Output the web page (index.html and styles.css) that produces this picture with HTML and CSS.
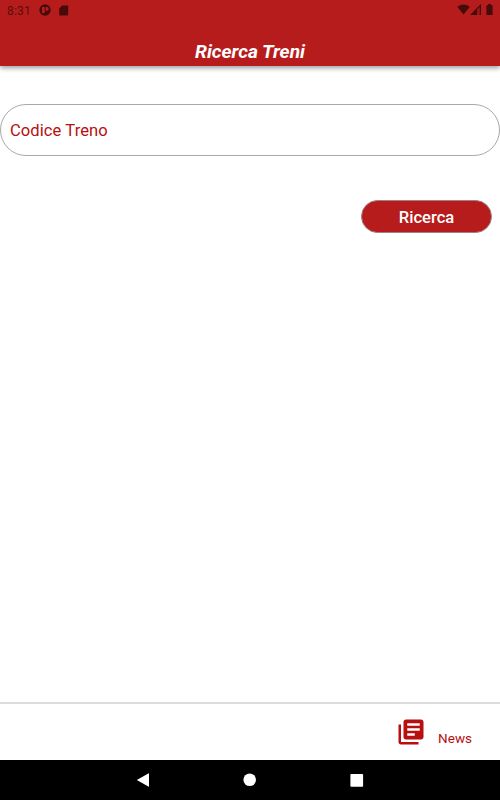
FILE: index.html
```html
<!DOCTYPE html>
<html lang="it">
<head>
    <meta charset="UTF-8">
    <meta name="viewport" content="width=device-width, initial-scale=1.0">
    <title>Ricerca Treni</title>
    <link rel="stylesheet" href="styles.css">
</head>
<body>
    <header class="header">
        <div class="status-bar">
            <span class="clock">8:31</span>
            <svg class="app-icon" viewBox="0 0 12 12">
                <circle cx="6" cy="6" r="5.7"/>
                <path class="cutout" d="M3 3h2.7v6H3zM6.6 3h1.2a1.9 1.9 0 0 1 0 3.8H6.6z"/>
            </svg>
            <svg class="sd-icon" viewBox="0 0 10 11">
                <path d="M3.3 .4H8.2Q9.2 .4 9.2 1.4V9.4Q9.2 10.4 8.2 10.4H1.2Q.2 10.4 .2 9.4V3.4z"/>
            </svg>
            <div class="status-right">
                <svg class="wifi-icon" viewBox="0 0 13 11">
                    <path d="M6.5 10.6L.2 2.8Q6.5-2 12.8 2.8z"/>
                </svg>
                <svg class="signal-icon" viewBox="0 0 11 11">
                    <path class="signal-dim" d="M0 11L11 0V11z"/>
                    <path d="M0 11L7 4V11zM7 4L11 0V11H9.8V2.6L7 5.4z"/>
                </svg>
                <svg class="battery-icon" viewBox="0 0 7 11">
                    <path d="M2 0h3v1.2h1.6V11H.4V1.2H2z"/>
                </svg>
            </div>
        </div>
        <h1>Ricerca Treni</h1>
    </header>

    <main class="content">
        <input class="train-input" type="text" placeholder="Codice Treno">
        <button class="search-btn">Ricerca</button>
    </main>

    <footer class="tab-bar">
        <a class="tab">
            <svg class="news-icon" viewBox="0 0 24 24">
                <path d="M4 6H2v14c0 1.1.9 2 2 2h14v-2H4V6zm16-4H8c-1.1 0-2 .9-2 2v12c0 1.1.9 2 2 2h12c1.1 0 2-.9 2-2V4c0-1.1-.9-2-2-2zm-1 9H9V9h10v2zm-4 4H9v-2h6v2zm4-8H9V5h10v2z"/>
            </svg>
            <span class="tab-label">News</span>
        </a>
    </footer>

    <nav class="nav-bar">
        <svg viewBox="0 0 14 14"><path d="M.8 7L12.3 .4Q13 0 13 .8V13.2Q13 14 12.3 13.6z"/></svg>
        <svg viewBox="0 0 14 14"><circle cx="6.7" cy="6.7" r="6.3"/></svg>
        <svg viewBox="0 0 14 14"><rect x=".4" y="1" width="12.7" height="12.7" rx=".8"/></svg>
    </nav>
</body>
</html>
```

FILE: styles.css
```css
* {
    box-sizing: border-box;
}
body {
    display: flex;
    flex-direction: column;
    height: 100vh;
    margin: 0;
    font-family: Roboto, sans-serif;
    background-color: #ffffff;
}
.header {
    height: 66px;
    background-color: #b71c1c;
    box-shadow: 0 2px 5px rgba(0,0,0,0.4);
}
.status-bar {
    display: flex;
    align-items: center;
    height: 20px;
    padding: 0 7px;
    color: #5a0e0e;
    fill: #470b0b;
}
.clock {
    width: 32px;
    padding-top: 1px;
    font-size: 12px;
    letter-spacing: 0.2px;
}
.app-icon {
    width: 12px;
    height: 12px;
    margin-right: 8px;
}
.cutout {
    fill: #b71c1c;
}
.sd-icon {
    width: 10px;
    height: 11px;
}
.status-right {
    display: flex;
    margin-left: auto;
    margin-bottom: 2px;
}
.wifi-icon {
    width: 13px;
    height: 11px;
}
.signal-icon {
    width: 11px;
    height: 11px;
    margin-right: 5px;
}
.signal-dim {
    opacity: 0.25;
}
.battery-icon {
    width: 7px;
    height: 11px;
}
h1 {
    margin: 0;
    padding-top: 21px;
    font-size: 19.2px;
    line-height: 22px;
    font-style: italic;
    font-weight: bold;
    text-align: center;
    color: #ffffff;
}
.content {
    display: flex;
    flex: 1;
    flex-direction: column;
    padding-top: 38px;
}
.train-input {
    width: 100%;
    height: 52px;
    padding: 1px 9px 0;
    border: 1px solid #a9a9a9;
    border-radius: 26px;
    font-family: inherit;
    font-size: 16.6px;
    letter-spacing: 0.05px;
    outline: none;
    background-color: #ffffff;
    color: #b80f0f;
}
.train-input::placeholder {
    color: #b80f0f;
}
.search-btn {
    align-self: flex-end;
    width: 131px;
    height: 33px;
    margin: 44px 8px 0 0;
    padding: 2px 0 0;
    border: 1px solid #a08080;
    border-radius: 17px;
    font-family: inherit;
    font-size: 16.6px;
    font-weight: 500;
    background-color: #b71c1c;
    color: #ffffff;
}
.tab-bar {
    display: flex;
    justify-content: flex-end;
    height: 58px;
    padding: 13px 28px 0 0;
    border-top: 2px solid #dcdcdc;
}
.tab {
    display: flex;
    align-items: flex-start;
    color: #b80f0f;
}
.news-icon {
    width: 30px;
    height: 30px;
    margin-right: 12px;
    fill: #b80f0f;
}
.tab-label {
    padding-top: 13px;
    font-size: 13.5px;
    line-height: 16px;
}
.nav-bar {
    display: flex;
    justify-content: center;
    align-items: center;
    gap: 93px;
    height: 40px;
    background-color: #000000;
    fill: #ffffff;
}
.nav-bar svg {
    width: 14px;
    height: 14px;
}
```
